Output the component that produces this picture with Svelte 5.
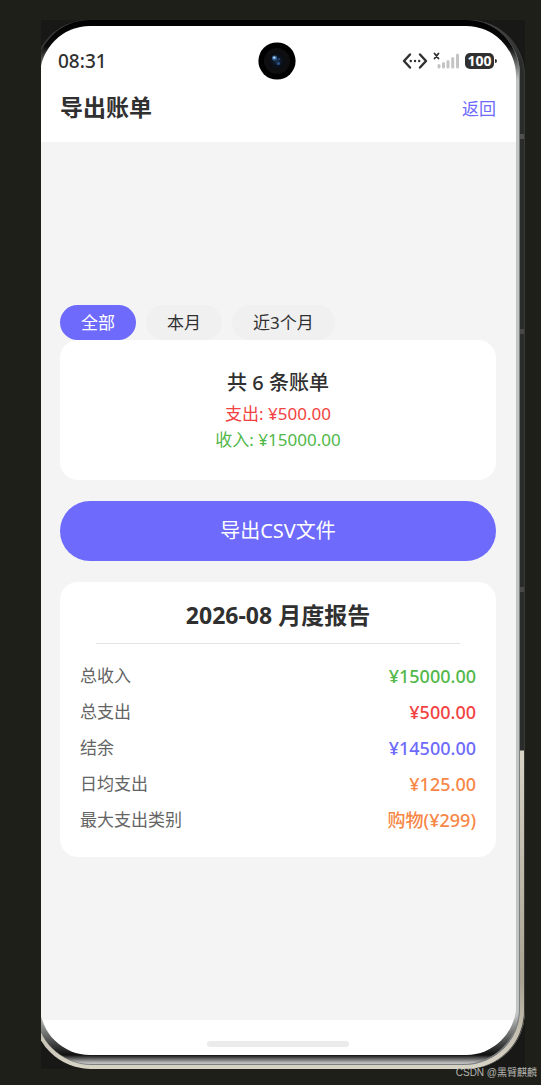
<script>
  const ranges = ['全部', '本月', '近3个月'];
  let selected = $state('全部');

  const rows = [
    { label: '总收入', value: '¥15000.00', tone: 'green' },
    { label: '总支出', value: '¥500.00', tone: 'red' },
    { label: '结余', value: '¥14500.00', tone: 'violet' },
    { label: '日均支出', value: '¥125.00', tone: 'orange' },
    { label: '最大支出类别', value: '购物(¥299)', tone: 'orange' }
  ];
</script>

<div class="stage">
  <div class="device">
    <div class="shell">
      <div class="rim">
        <div class="screen">
          <div class="status">
            <span class="time">08:31</span>
            <svg class="camera" width="38" height="38" viewBox="0 0 38 38" aria-hidden="true">
              <defs>
                <radialGradient id="lens">
                  <stop offset="0" stop-color="#1d3350" />
                  <stop offset="0.5" stop-color="#0b1422" />
                  <stop offset="1" stop-color="#0b0c0f" />
                </radialGradient>
              </defs>
              <circle cx="19" cy="19" r="18.6" fill="#000" />
              <circle cx="19" cy="19" r="13" fill="#0e0e10" />
              <circle cx="19" cy="19" r="8.5" fill="url(#lens)" />
              <circle cx="16.5" cy="16" r="2.6" fill="#2f5f92" />
              <circle cx="16.3" cy="15.6" r="1.2" fill="#b9dcf8" />
              <circle cx="20.5" cy="21.5" r="1.6" fill="#2b568c" />
              <circle cx="21" cy="17" r="1" fill="#254a78" />
            </svg>
            <div class="indicators">
              <svg width="26" height="18" viewBox="0 0 26 18" aria-hidden="true">
                <path d="M8 2.500 2 9l6 6.500M18 2.500 24 9l-6 6.500" fill="none" stroke="#303030" stroke-width="2.400" stroke-linecap="round" stroke-linejoin="round" />
                <g fill="#303030"><circle cx="8.800" cy="9" r="1.200" /><circle cx="13" cy="9" r="1.200" /><circle cx="17.200" cy="9" r="1.200" /></g>
              </svg>
              <svg width="27" height="18" viewBox="0 0 27 18" aria-hidden="true">
                <path d="m1.500 1.500 4 5M5.500 1.500l-4 5" stroke="#303030" stroke-width="1.800" stroke-linecap="round" />
                <g stroke="#c4c4c4" stroke-width="3" stroke-linecap="round">
                  <path d="M6 13.500v1.500M10.500 11.500v3.500M15 9.500v5.500M19.700 6.500v8.500M24.500 3v12" />
                </g>
              </svg>
              <span class="battery">100</span>
            </div>
          </div>

          <header>
            <h1>导出账单</h1>
            <a href="#back">返回</a>
          </header>

          <main>
            <div class="tabs">
              {#each ranges as range}
                <button class="tab" class:active={selected === range} onclick={() => (selected = range)}>{range}</button>
              {/each}
            </div>

            <section class="card summary">
              <h2>共 6 条账单</h2>
              <p class="red">支出: ¥500.00</p>
              <p class="green">收入: ¥15000.00</p>
            </section>

            <button class="export">导出CSV文件</button>

            <section class="card report">
              <h2>2026-08 月度报告</h2>
              <hr />
              <dl>
                {#each rows as row}
                  <div class="row">
                    <dt>{row.label}</dt>
                    <dd class={row.tone}>{row.value}</dd>
                  </div>
                {/each}
              </dl>
            </section>
          </main>

          <footer><span class="handle"></span></footer>
        </div>
      </div>
    </div>
  </div>
  <span class="credit">CSDN @黑臂麒麟</span>
</div>

<style>
  :global(body) {
    margin: 0;
    background: #1f1f1a;
  }

  .stage {
    position: relative;
    box-sizing: border-box;
    min-height: 100vh;
    padding: 20px 16px 16px 41px;
    display: flex;
    font-family: 'Noto Sans', 'Noto Sans CJK SC', sans-serif;
    font-size: 17px;
    color: #303030;
  }

  .device {
    flex: 1;
    display: flex;
    overflow: hidden;
    background: #181817;
  }

  .shell {
    flex: 1;
    display: flex;
    margin-left: -8px;
    padding: 0 5px 4px 3px;
    border-radius: 56px 56px 58px 58px;
    background: linear-gradient(
      #4a4a4a 0, #2a2b2b 40px, #2a2b2b 114px, #505050 114px, #505050 119px,
      #2a2b2b 119px, #2a2b2b 309px, #484848 309px, #484848 314px,
      #2a2b2b 314px, #2a2b2b 567px, #484848 567px, #484848 572px,
      #2a2b2b 572px, #2a2b2b 730px, #d8d4c6 731px, #a9a291 960px, #d8d4c6 100%
    );
    box-shadow: inset -1px 0 0 #3a3a38;
  }

  .rim {
    flex: 1;
    display: flex;
    padding: 6px 4px 10px;
    border-radius: 54px 54px 56px 56px;
    background: linear-gradient(#000 0, #0a0a0a 26px, #c2c4c4 60px, #c2c4c4 calc(100% - 50px), #101010 calc(100% - 10px), #c0c0c0 calc(100% - 2px));
    box-shadow: inset -1px -1px 0 #7d8080;
  }

  .screen {
    flex: 1;
    min-width: 0;
    display: flex;
    flex-direction: column;
    overflow: hidden;
    border-radius: 50px;
    background: #fff;
  }

  .status {
    display: grid;
    grid-template-columns: 1fr auto 1fr;
    align-items: center;
    padding: 16px 20px 0 18px;
  }

  .time {
    font-size: 19px;
    line-height: 38px;
    font-weight: 500;
  }

  .camera {
    display: block;
  }

  .indicators {
    display: flex;
    align-items: center;
    justify-content: flex-end;
    gap: 5px;
  }

  .battery {
    position: relative;
    box-sizing: border-box;
    width: 29px;
    margin-right: 2px;
    border-radius: 5px;
    background: #303030;
    color: #fff;
    font-size: 14px;
    line-height: 16px;
    font-weight: 700;
    text-align: center;
  }

  .battery::after {
    content: '';
    position: absolute;
    right: -3px;
    top: 6px;
    width: 2px;
    height: 4px;
    border-radius: 0 2px 2px 0;
    background: #303030;
  }

  header {
    display: flex;
    align-items: center;
    justify-content: space-between;
    padding: 9px 20px 17px;
  }

  h1,
  h2,
  p,
  dl,
  dd {
    margin: 0;
  }

  h1 {
    font-size: 23px;
    line-height: 36px;
    font-weight: 700;
  }

  a {
    color: #6d6afc;
    text-decoration: none;
  }

  main {
    flex: 1;
    display: flex;
    flex-direction: column;
    justify-content: center;
    padding: 0 20px;
    background: #f4f4f4;
  }

  button {
    border: 0;
    font-family: inherit;
    cursor: pointer;
  }

  .tabs {
    display: flex;
    gap: 10px;
  }

  .tab {
    padding: 0 21px;
    border-radius: 18px;
    background: #f0f0f0;
    color: #303030;
    font-size: 17px;
    line-height: 35px;
  }

  .tab.active {
    background: #6d6afc;
    color: #fff;
  }

  .card {
    border-radius: 18px;
    background: #fff;
    text-align: center;
  }

  .summary {
    padding: 27px 20px;
  }

  .summary h2 {
    margin-bottom: 2px;
    font-size: 20px;
    line-height: 32px;
    font-weight: 500;
  }

  .summary p {
    line-height: 26px;
  }

  .export {
    margin: 21px 0;
    padding: 0;
    border-radius: 30px;
    background: #6d6afc;
    color: #fff;
    font-size: 20px;
    line-height: 60px;
  }

  .report {
    padding: 16px 20px 19px;
  }

  .report h2 {
    font-size: 23px;
    line-height: 34px;
    font-weight: 700;
  }

  hr {
    height: 1px;
    margin: 11px 16px 14px;
    border: 0;
    background: #e4e4e4;
  }

  .row {
    display: flex;
    justify-content: space-between;
    line-height: 36px;
  }

  dt {
    color: #646464;
  }

  dd {
    font-size: 18px;
    font-weight: 500;
  }

  .green {
    color: #52b84a;
  }

  .red {
    color: #f24242;
  }

  .violet {
    color: #6d6afc;
  }

  .orange {
    color: #f78747;
  }

  footer {
    display: flex;
    justify-content: center;
    padding: 21px 0 8px;
  }

  .handle {
    width: 30%;
    height: 6px;
    border-radius: 3px;
    background: #ebebeb;
  }

  .credit {
    position: absolute;
    right: 4px;
    bottom: 4px;
    color: #b4b4b0;
    font-family: 'Liberation Sans', 'Noto Sans CJK SC', sans-serif;
    font-size: 10px;
    line-height: 16px;
  }
</style>
